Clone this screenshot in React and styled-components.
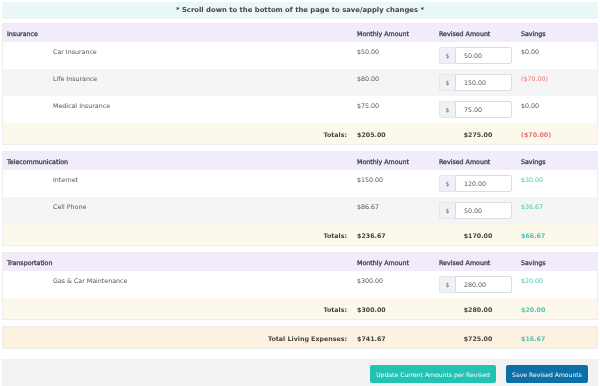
import React from 'react';
import styled, { createGlobalStyle } from 'styled-components';

const GlobalStyle = createGlobalStyle`
  body {
    margin: 0;
    background: #fff;
    font-family: "DejaVu Sans", "Open Sans", sans-serif;
    color: #555;
    -webkit-font-smoothing: antialiased;
  }
`;

const COLS = '1fr 82px 82px 76px';

const Page = styled.div`
  padding: 2px 2px 0 2px;
  width: 596px;
  background: #fff;
  will-change: transform;
`;

const Banner = styled.div`
  height: 17px;
  line-height: 17px;
  background: #e9f8f7;
  text-align: center;
  font-size: 6.85px;
  font-weight: bold;
  color: #444;
  margin-bottom: 4px;
`;

const Card = styled.div`
  border: 1px solid #ececec;
  margin-bottom: ${p => (p.$last ? '10px' : '6px')};
  background: #fff;
`;

const Row = styled.div`
  display: grid;
  grid-template-columns: ${COLS};
  height: ${p => p.$h}px;
  background: ${p => p.$bg};
  font-size: 6.3px;
`;

const Cell = styled.div`
  padding: ${p => p.$pt ?? 5}px 4px 0 0;
  line-height: 9px;
  text-align: ${p => p.$align || 'left'};
  font-weight: ${p => (p.$bold ? 'bold' : 'normal')};
  color: ${p => p.$color || '#555'};
  white-space: nowrap;
`;

const HeadCell = styled(Cell)`
  color: #3f3f46;
  -webkit-text-stroke: 0.3px #3f3f46;
`;

const TitleCell = styled(HeadCell)`
  padding-left: 4px;
`;

const NameCell = styled(Cell)`
  padding-left: 50px;
`;

const LabelCell = styled(Cell)`
  text-align: right;
  padding-right: 10px;
  color: #444;
`;

const InputGroup = styled.div`
  display: flex;
  margin-top: 5px;
  height: 17px;
`;

const Addon = styled.div`
  width: 15px;
  background: #eef1f5;
  border: 1px solid #e3e6ea;
  border-right: none;
  border-radius: 2px 0 0 2px;
  font-size: 6px;
  color: #666;
  display: flex;
  align-items: center;
  justify-content: center;
`;

const Input = styled.div`
  width: 47px;
  border: 1px solid #d9dde2;
  border-radius: 0 2px 2px 0;
  padding-left: 8px;
  font-size: 6.3px;
  color: #555;
  display: flex;
  align-items: center;
  background: #fff;
`;

const Footer = styled.div`
  background: #f2f2f2;
  height: 30px;
  display: flex;
  justify-content: flex-end;
  align-items: flex-start;
  gap: 10px;
  padding: 6px 10px 0 0;
  box-sizing: border-box;
`;

const Button = styled.div`
  height: 18px;
  width: ${p => p.$w}px;
  justify-content: center;
  background: ${p => p.$bg};
  color: #fff;
  border-radius: 2px;
  font-size: 6.1px;
  display: flex;
  align-items: center;
  white-space: nowrap;
`;

const RED = '#e57373';
const GREEN = '#4fc3b1';

const sections = [
  {
    title: 'Insurance',
    items: [
      { name: 'Car Insurance', monthly: '$50.00', revised: '50.00', savings: '$0.00' },
      { name: 'Life Insurance', monthly: '$80.00', revised: '150.00', savings: '($70.00)', color: RED },
      { name: 'Medical Insurance', monthly: '$75.00', revised: '75.00', savings: '$0.00' },
    ],
    totals: ['$205.00', '$275.00', '($70.00)'],
    color: RED,
  },
  {
    title: 'Telecommunication',
    items: [
      { name: 'Internet', monthly: '$150.00', revised: '120.00', savings: '$30.00', color: GREEN },
      { name: 'Cell Phone', monthly: '$86.67', revised: '50.00', savings: '$36.67', color: GREEN },
    ],
    totals: ['$236.67', '$170.00', '$66.67'],
    color: GREEN,
  },
  {
    title: 'Transportation',
    items: [
      { name: 'Gas & Car Maintenance', monthly: '$300.00', revised: '280.00', savings: '$20.00', color: GREEN },
    ],
    totals: ['$300.00', '$280.00', '$20.00'],
    color: GREEN,
  },
];

function Section({ s }) {
  return (
    <Card>
      <Row $h={18} $bg="#f1ebfc">
        <TitleCell $pt={5}>{s.title}</TitleCell>
        <HeadCell $pt={5}>Monthly Amount</HeadCell>
        <HeadCell $pt={5}>Revised Amount</HeadCell>
        <HeadCell $pt={5}>Savings</HeadCell>
      </Row>
      {s.items.map((it, i) => (
        <Row key={it.name} $h={27} $bg={i % 2 ? '#f5f5f5' : '#fff'}>
          <NameCell>{it.name}</NameCell>
          <Cell>{it.monthly}</Cell>
          <Cell $pt={0}>
            <InputGroup>
              <Addon>$</Addon>
              <Input>{it.revised}</Input>
            </InputGroup>
          </Cell>
          <Cell $color={it.color}>{it.savings}</Cell>
        </Row>
      ))}
      <Row $h={21} $bg="#fdf8ec">
        <LabelCell $pt={7} $bold>Totals:</LabelCell>
        <Cell $pt={7} $bold $color="#444">{s.totals[0]}</Cell>
        <Cell $pt={7} $bold $color="#444" $align="center">{s.totals[1]}</Cell>
        <Cell $pt={7} $bold $color={s.color}>{s.totals[2]}</Cell>
      </Row>
    </Card>
  );
}

export default function App() {
  return (
    <>
      <GlobalStyle />
      <Page>
        <Banner>* Scroll down to the bottom of the page to save/apply changes *</Banner>
        {sections.map(s => <Section key={s.title} s={s} />)}
        <Card $last>
          <Row $h={21} $bg="#fdf1df">
            <LabelCell $pt={7} $bold>Total Living Expenses:</LabelCell>
            <Cell $pt={7} $bold $color="#444">$741.67</Cell>
            <Cell $pt={7} $bold $color="#444" $align="center">$725.00</Cell>
            <Cell $pt={7} $bold $color={GREEN}>$16.67</Cell>
          </Row>
        </Card>
        <Footer>
          <Button $bg="#22c3b3" $w={126}>Update Current Amounts per Revised</Button>
          <Button $bg="#0b6fa8" $w={82}>Save Revised Amounts</Button>
        </Footer>
      </Page>
    </>
  );
}
